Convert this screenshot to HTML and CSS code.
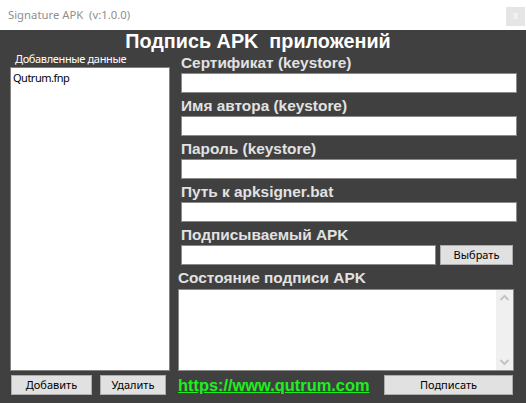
FILE: index.html
```html
<!DOCTYPE html>
<html>
<head>
<meta charset="utf-8">
<link rel="stylesheet" href="styles.css">
</head>
<body>
<div class="app">
  <div class="titlebar">
    <span class="app-title">Signature APK&nbsp; (v:1.0.0)</span>
    <span class="close">x</span>
  </div>
  <div class="window">
    <h1 class="heading">Подпись APK&nbsp; приложений</h1>
    <div class="body">
      <div class="left">
        <div class="list-label">Добавленные данные</div>
        <div class="listbox"><div class="item">Qutrum.fnp</div></div>
        <div class="left-buttons">
          <button class="btn btn-add">Добавить</button>
          <button class="btn btn-del">Удалить</button>
        </div>
      </div>
      <div class="right">
        <div class="field">
          <div class="label">Сертификат (keystore)</div>
          <div class="input"></div>
        </div>
        <div class="field">
          <div class="label">Имя автора (keystore)</div>
          <div class="input"></div>
        </div>
        <div class="field">
          <div class="label">Пароль (keystore)</div>
          <div class="input"></div>
        </div>
        <div class="field">
          <div class="label">Путь к apksigner.bat</div>
          <div class="input"></div>
        </div>
        <div class="field">
          <div class="label">Подписываемый APK</div>
          <div class="apk-row">
            <div class="input input-apk"></div>
            <button class="btn btn-choose">Выбрать</button>
          </div>
        </div>
        <div class="status-label">Состояние подписи APK</div>
        <div class="status">
          <div class="status-text"></div>
          <div class="scrollbar">
            <svg width="17" height="17" viewBox="0 0 17 17"><polyline points="4.5,10 8.5,6 12.5,10" fill="none" stroke="#c4c4c4" stroke-width="2"/></svg>
            <svg width="17" height="17" viewBox="0 0 17 17"><polyline points="4.5,7 8.5,11 12.5,7" fill="none" stroke="#c4c4c4" stroke-width="2"/></svg>
          </div>
        </div>
        <div class="bottom-row">
          <a class="link" href="#">https://www.qutrum.com</a>
          <button class="btn btn-sign">Подписать</button>
        </div>
      </div>
    </div>
  </div>
</div>
</body>
</html>
```
FILE: styles.css
```css
html, body {
  margin: 0;
  padding: 0;
}
body {
  width: 526px;
  height: 403px;
  overflow: hidden;
  background: #404040;
}
.app {
  width: 526px;
  height: 403px;
  display: flex;
  flex-direction: column;
}
.titlebar {
  height: 30px;
  background: #ffffff;
  display: flex;
  justify-content: space-between;
  align-items: flex-start;
  padding-left: 8px;
  box-sizing: border-box;
}
.app-title {
  font-family: "Noto Sans", "Open Sans", sans-serif;
  font-size: 11.3px;
  line-height: 30px;
  color: #8f8f8f;
}
.close {
  width: 19px;
  height: 19px;
  margin-top: 7px;
  margin-right: 1px;
  background: #e5e5e5;
  color: #f7f7f7;
  font-family: "Liberation Sans", sans-serif;
  font-size: 10px;
  font-weight: bold;
  line-height: 18px;
  text-align: center;
}
.window {
  flex: 1;
  display: flex;
  flex-direction: column;
  padding-left: 10px;
  background: #404040;
}
.heading {
  margin: 0 0 0 -10px;
  height: 22px;
  line-height: 22px;
  font-family: "Liberation Sans", Arial, sans-serif;
  font-weight: bold;
  font-size: 19.8px;
  color: #ffffff;
  text-align: center;
  padding-right: 10px;
}
.body {
  display: flex;
  gap: 8px;
}
.left {
  width: 160px;
  display: flex;
  flex-direction: column;
}
.list-label {
  height: 15px;
  line-height: 14px;
  padding-left: 5px;
  font-family: "Noto Sans", "Open Sans", sans-serif;
  font-size: 11px;
  letter-spacing: -0.35px;
  color: #ffffff;
}
.listbox {
  width: 160px;
  height: 304px;
  box-sizing: border-box;
  background: #ffffff;
  border: 1px solid #828282;
  padding: 3px 2px;
}
.item {
  font-family: "Noto Sans", "Open Sans", sans-serif;
  font-size: 11px;
  letter-spacing: -0.5px;
  line-height: 14px;
  color: #000000;
}
.left-buttons {
  margin-top: 4px;
  display: flex;
  padding-left: 1px;
  gap: 8px;
}
.btn {
  height: 20px;
  box-sizing: border-box;
  background: #e1e1e1;
  border: 1px solid #adadad;
  padding: 0;
  font-family: "Noto Sans", "Open Sans", sans-serif;
  font-size: 11px;
  color: #000000;
  line-height: 16px;
}
.btn-add { width: 81px; }
.btn-del { width: 66px; }
.right {
  width: 339px;
  display: flex;
  flex-direction: column;
  padding-top: 1px;
}
.field {
  margin-bottom: 3px;
}
.label {
  height: 20px;
  line-height: 20px;
  padding-left: 3px;
  font-family: "Liberation Sans", Arial, sans-serif;
  font-weight: bold;
  font-size: 15.4px;
  color: #e2e2e2;
  white-space: nowrap;
}
.input {
  margin-left: 3px;
  width: 336px;
  height: 20px;
  box-sizing: border-box;
  background: #ffffff;
  border: 1px solid #8a8a8a;
}
.apk-row {
  display: flex;
  gap: 4px;
}
.input-apk {
  width: 255px;
}
.btn-choose {
  width: 73px;
}
.status-label {
  height: 21px;
  line-height: 19px;
  font-family: "Liberation Sans", Arial, sans-serif;
  font-weight: bold;
  font-size: 15.4px;
  color: #e2e2e2;
  white-space: nowrap;
}
.status {
  width: 336px;
  height: 82px;
  box-sizing: border-box;
  background: #ffffff;
  border: 1px solid #8a8a8a;
  display: flex;
}
.status-text {
  flex: 1;
}
.scrollbar {
  width: 17px;
  background: #f0f0f0;
  display: flex;
  flex-direction: column;
  justify-content: space-between;
}
.scrollbar svg {
  display: block;
}
.bottom-row {
  margin-top: 4px;
  display: flex;
  justify-content: space-between;
  align-items: center;
  width: 335px;
}
.link {
  font-family: "Liberation Sans", Arial, sans-serif;
  font-weight: bold;
  font-size: 16.4px;
  color: #1cf01c;
  text-decoration: underline;
  line-height: 20px;
}
.btn-sign {
  width: 129px;
}
```
